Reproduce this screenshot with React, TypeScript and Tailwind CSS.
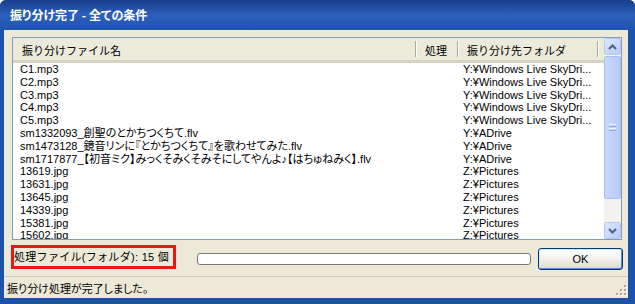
import React from "react";

const FONT = "[font-family:'Liberation_Sans','Noto_Sans_CJK_JP',sans-serif] [font-feature-settings:'palt']";

const rows: [string, string][] = [
  ["C1.mp3", "Y:¥Windows Live SkyDri..."],
  ["C2.mp3", "Y:¥Windows Live SkyDri..."],
  ["C3.mp3", "Y:¥Windows Live SkyDri..."],
  ["C4.mp3", "Y:¥Windows Live SkyDri..."],
  ["C5.mp3", "Y:¥Windows Live SkyDri..."],
  ["sm1332093_創聖のとかちつくちて.flv", "Y:¥ADrive"],
  ["sm1473128_鏡音リンに『とかちつくちて』を歌わせてみた.flv", "Y:¥ADrive"],
  ["sm1717877_【初音ミク】みっくそみくそみそにしてやんよ♪【はちゅねみく】.flv", "Y:¥ADrive"],
  ["13619.jpg", "Z:¥Pictures"],
  ["13631.jpg", "Z:¥Pictures"],
  ["13645.jpg", "Z:¥Pictures"],
  ["14339.jpg", "Z:¥Pictures"],
  ["15381.jpg", "Z:¥Pictures"],
  ["15602.jpg", "Z:¥Pictures"],
];

const HeaderSep = () => (
  <div className="flex h-[16px] w-[2px] self-center">
    <div className="w-px bg-[#aca899]" />
    <div className="w-px bg-white" />
  </div>
);

const ArrowButton = ({ up }: { up?: boolean }) => (
  <div className="flex h-[17px] w-[17px] items-center justify-center rounded-[2px] border border-[#b5c8f3] bg-gradient-to-br from-[#dce6fd] to-[#b9cdf8]">
    <svg width="9" height="6" viewBox="0 0 9 6">
      <path
        d={up ? "M1 5 L4.5 1.5 L8 5" : "M1 1 L4.5 4.5 L8 1"}
        fill="none"
        stroke="#4d6185"
        strokeWidth="2"
      />
    </svg>
  </div>
);

const ScrollBar = () => (
  <div className="flex w-[17px] flex-col bg-[#f3f2ec]">
    <ArrowButton up />
    <div className="mt-px flex h-[143px] items-center justify-center rounded-[2px] border border-[#a9bff1] bg-gradient-to-r from-[#c9d8fc] to-[#b7cbf7]">
      <div className="flex flex-col gap-px">
        <div className="h-px w-[7px] bg-[#eef4fe]" />
        <div className="h-px w-[7px] bg-[#8caef1]" />
        <div className="h-px w-[7px] bg-[#eef4fe]" />
        <div className="h-px w-[7px] bg-[#8caef1]" />
      </div>
    </div>
    <div className="flex-1" />
    <ArrowButton />
  </div>
);

export default function App() {
  return (
    <div className={`flex h-[304px] w-[635px] flex-col overflow-hidden rounded-t-[6px] bg-[#1d52ab] text-[11px] text-black ${FONT}`}>
      {/* title bar */}
      <div className="flex h-[30px] items-center bg-gradient-to-b from-[#1a3f8c] via-[#2c60bb] to-[#1f55ae] pl-[10px]">
        <span className="text-[12px] font-bold text-white [font-family:'Noto_Sans_CJK_JP',sans-serif]">
          振り分け完了 - 全ての条件
        </span>
      </div>

      <div className="flex flex-1 flex-col pb-[6px] pl-[4px] pr-[7px]">
        <div className="flex flex-1 flex-col bg-[#ece9d8]">
          {/* list view */}
          <div className="ml-[8px] mt-[7px] flex h-[203px] w-[610px] border border-[#7f9db9] bg-white">
            <div className="flex w-[591px] flex-col overflow-hidden">
              <div className="flex h-[25px] shrink-0 border-b-[3px] border-[#d6d2c2] bg-[#ebeadb] [font-feature-settings:normal]">
                <div className="flex w-[402px] items-center pl-[9px] pt-[5px]">振り分けファイル名</div>
                <HeaderSep />
                <div className="flex w-[40px] items-center pl-[8px] pt-[5px]">処理</div>
                <HeaderSep />
                <div className="flex w-[138px] items-center pl-[8px] pt-[5px]">振り分け先フォルダ</div>
                <HeaderSep />
                <div className="flex-1" />
              </div>
              <div className="flex flex-col">
                {rows.map(([name, dest], i) => (
                  <div key={i} className="flex h-[12.8px] shrink-0 items-center leading-[12.8px]">
                    <div className="w-[444px] whitespace-nowrap pl-[7px]">{name}</div>
                    <div className="whitespace-nowrap pl-[6px]">{dest}</div>
                  </div>
                ))}
              </div>
            </div>
            <ScrollBar />
          </div>

          {/* bottom row */}
          <div className="mt-[5px] flex h-[25px] items-start">
            <div className="ml-[7px] flex h-[24px] w-[165px] items-center whitespace-nowrap border-[3px] border-[#ee1515] tracking-[0.3px] [font-feature-settings:normal]">
              処理ファイル(フォルダ): 15 個
            </div>
            <div className="ml-[21px] mt-[8px] h-[12px] w-[334px] rounded-[3px] border border-[#787878] bg-white" />
            <button className="ml-[7px] mt-[3px] flex h-[22px] w-[85px] items-center justify-center rounded-[3px] border border-[#003c74] bg-gradient-to-b from-white via-[#f3f2ee] to-[#dcd8cc] shadow-[inset_-1px_-1px_0_#6982ee,inset_1px_1px_0_#cee7ff]">
              OK
            </button>
          </div>

          {/* status bar */}
          <div className="mt-[6px] flex h-[22px] items-center justify-between border-t border-[#cfcbbb] pl-[3px] pr-[1px] pt-[3px]">
            <span>振り分け処理が完了しました。</span>
            <svg width="11" height="11" viewBox="0 0 11 11" className="mb-[2px] mt-[4px] self-end">
              {[
                [8, 0], [4, 4], [8, 4], [0, 8], [4, 8], [8, 8],
              ].map(([x, y], i) => (
                <g key={i}>
                  <rect x={x + 1} y={y + 1} width="2" height="2" fill="#ffffff" />
                  <rect x={x} y={y} width="2" height="2" fill="#aca899" />
                </g>
              ))}
            </svg>
          </div>
        </div>
      </div>
    </div>
  );
}
